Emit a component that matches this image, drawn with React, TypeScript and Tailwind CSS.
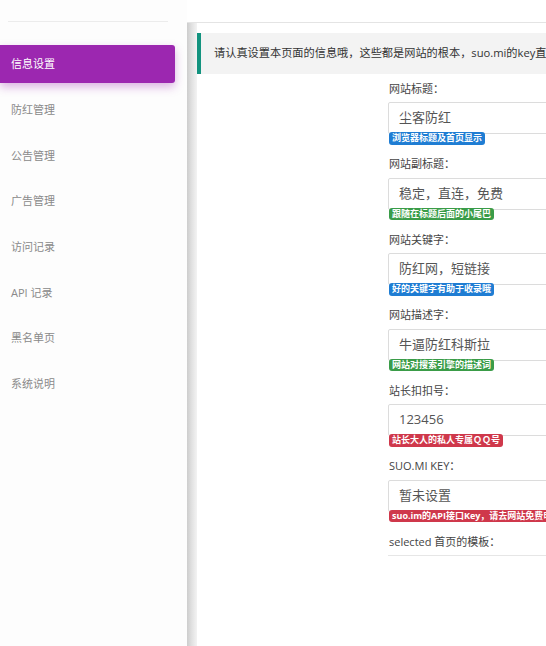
const NAV = ['信息设置', '防红管理', '公告管理', '广告管理', '访问记录', 'API 记录', '黑名单页', '系统说明'];

type Tone = 'blue' | 'green' | 'red';

const TONE: Record<Tone, string> = {
  blue: 'bg-[#1f7dd3]',
  green: 'bg-[#3a9c48]',
  red: 'bg-[#cf384b]',
};

const FIELDS: { label: string; value: string; hint?: string; tone?: Tone }[] = [
  { label: '网站标题：', value: '尘客防红', hint: '浏览器标题及首页显示', tone: 'blue' },
  { label: '网站副标题：', value: '稳定，直连，免费', hint: '跟随在标题后面的小尾巴', tone: 'green' },
  { label: '网站关键字：', value: '防红网，短链接', hint: '好的关键字有助于收录哦', tone: 'blue' },
  { label: '网站描述字：', value: '牛逼防红科斯拉', hint: '网站对搜索引擎的描述词', tone: 'green' },
  { label: '站长扣扣号：', value: '123456', hint: '站长大人的私人专属ＱＱ号', tone: 'red' },
  { label: 'SUO.MI KEY：', value: '暂未设置', hint: 'suo.im的API接口Key，请去网站免费申请', tone: 'red' },
  { label: 'selected 首页的模板：', value: '' },
];

const font = { fontFamily: '"Open Sans", "Noto Sans CJK SC", sans-serif' };

export default function App() {
  return (
    <div className="flex w-[546px] h-[646px] overflow-hidden bg-white" style={font}>
      <aside className="w-[187px] shrink-0 bg-[#fdfdfd] pt-[21px]">
        <div className="ml-[8px] mr-[19px] border-t border-[#ececec]" />
        <nav className="mt-[23px] flex flex-col gap-[7.7px]">
          {NAV.map((item, i) => (
            <div
              key={item}
              className={
                i === 0
                  ? 'w-[175px] h-[38px] flex items-center pl-[11px] pt-[1px] text-[11px] text-white bg-[#9c27b0] rounded-r-[3px] shadow-[0_4px_10px_rgba(156,39,176,0.35)]'
                  : 'w-[175px] h-[38px] flex items-center pl-[11px] pt-[1px] text-[11px] text-[#8a8a8a]'
              }
            >
              {item}
            </div>
          ))}
        </nav>
      </aside>

      <main className="flex-1 mt-[22px] flex border-t border-[#e4e4e4] min-w-0">
        <div className="w-[10px] shrink-0 bg-gradient-to-r from-[#cdcdcd] via-[#e2e2e2] to-[#f3f3f3]" />
        <div className="flex-1 min-w-0 overflow-hidden">
          <div className="mt-[10px] h-[41px] flex items-center border-l-4 border-[#13937f] bg-[#f3f3f3] pl-[13px] text-[11.2px] text-[#333] whitespace-nowrap">
            请认真设置本页面的信息哦，这些都是网站的根本，suo.mi的key直接去网站申请即可
          </div>

          <form className="mt-[5px] pl-[191px]">
            {FIELDS.map((f) => (
              <div key={f.label} className="h-[75.5px]">
                <div className="h-[20px] flex items-center pl-[1px] text-[11px] text-[#444] whitespace-nowrap">{f.label}</div>
                {f.value ? (
                  <div className="mt-[3px] w-[220px] h-[32px] flex items-center border border-[#dcdcdc] rounded-[2px] bg-white pl-[10px] text-[13px] text-[#555] whitespace-nowrap">
                    {f.value}
                  </div>
                ) : (
                  <div className="mt-[3px] w-[220px] border-t border-[#e6e6e6]" />
                )}
                {f.hint && f.tone && (
                  <div
                    className={`relative mt-[-2px] ml-[1px] w-fit h-[12.5px] leading-[12.5px] px-[3px] rounded-[3px] text-[9px] font-bold text-white whitespace-nowrap ${TONE[f.tone]}`}
                  >
                    {f.hint}
                  </div>
                )}
              </div>
            ))}
          </form>
        </div>
      </main>
    </div>
  );
}
